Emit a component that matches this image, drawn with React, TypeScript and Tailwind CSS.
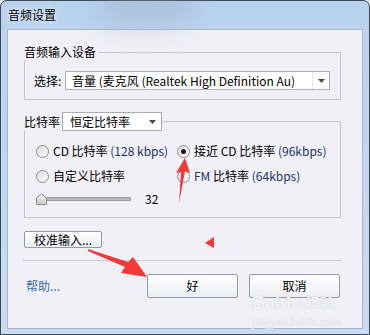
import React from 'react';

const FONT = "font-['Noto_Sans_CJK_SC','Noto_Sans',sans-serif]";

function Radio({ checked }: { checked?: boolean }) {
  return (
    <span className="flex h-[13px] w-[13px] shrink-0 items-center justify-center rounded-full border border-[#8c8c8c] bg-linear-to-br from-[#dcdcdc] to-white">
      {checked && <span className="h-[5px] w-[5px] rounded-full bg-[#1b1b1b]" />}
    </span>
  );
}

function Arrow() {
  return (
    <svg width="7" height="4" viewBox="0 0 7 4">
      <polygon points="0,0 7,0 3.5,4" fill="#4a4a4a" />
    </svg>
  );
}

function Button({ children, className }: { children: React.ReactNode; className: string }) {
  return (
    <div
      className={`flex items-center justify-center rounded-[2px] border border-[#9299aa] bg-linear-to-b from-white to-[#eceef3] text-[12px] leading-4 text-black ${className}`}
    >
      {children}
    </div>
  );
}

export default function App() {
  return (
    <div className={`relative h-[335px] w-[370px] overflow-hidden bg-[#dfe7f1] ${FONT}`}>
      <div className="flex h-full flex-col rounded-t-[7px] border border-[#3d4858] bg-linear-to-b from-[#b9d2ee] to-[#cadcf1] px-[6px] pb-[5px]">
        {/* Title bar */}
        <div className="relative flex h-[28px] items-center pl-[1px] text-[12px] leading-4 text-black [text-shadow:0_0_6px_white]">
          <div className="absolute left-[92px] top-[-4px] h-[16px] w-[95px] rounded-full bg-[#8ea1b8]/50 blur-md" />
          <div className="absolute left-[100px] top-[14px] h-[10px] w-[70px] rounded-full bg-[#a9bdd4]/60 blur-md" />
          <span className="relative">音频设置</span>
        </div>

        {/* Client area */}
        <div className="flex flex-1 flex-col border border-[#a6b6c9] bg-[#f0f0f6] pl-4 pr-[21px] pt-[14px] text-[12px] leading-4 text-black">
          {/* Group: input device */}
          <div className="flex h-4">
            <span>音频输入设备</span>
            <div className="ml-[2px] mt-2 flex-1 border-r border-t border-[#c3c8d0]" />
          </div>
          <div className="flex items-center border-b border-l border-r border-[#c3c8d0] pb-[9px] pl-[9px] pt-[11px]">
            <span className="w-[28px]">选择:</span>
            <div className="ml-[3px] flex h-[19px] w-[265px] items-center border border-[#abaeb6] bg-white pl-[6px]">
              <span className="flex-1 truncate">音量 (麦克风 (Realtek High Definition Au)</span>
              <div className="flex h-full w-[17px] items-center justify-center border-l border-[#e6e6e6]">
                <Arrow />
              </div>
            </div>
          </div>

          {/* Group: bit rate */}
          <div className="mt-3 flex h-[19px]">
            <span className="flex items-center">比特率</span>
            <div className="ml-[2px] flex h-[19px] w-[100px] items-center border border-[#abaeb6] bg-white pl-[7px]">
              <span className="flex-1">恒定比特率</span>
              <div className="flex w-[17px] items-center justify-center">
                <Arrow />
              </div>
            </div>
            <div className="mt-[9px] flex-1 border-r border-t border-[#c3c8d0]" />
          </div>
          <div className="flex flex-col gap-[9px] border-b border-l border-r border-[#c3c8d0] pb-3 pl-[11px] pt-3">
            <div className="grid grid-cols-[141px_1fr]">
              <div className="flex h-4 items-center gap-1">
                <Radio />
                <span>
                  CD 比特率 <span className="text-[#1f3470]">(128 kbps)</span>
                </span>
              </div>
              <div className="flex h-4 items-center gap-1">
                <Radio checked />
                <span>
                  接近 CD 比特率 <span className="text-[#1f3470]">(96kbps)</span>
                </span>
              </div>
            </div>
            <div className="grid grid-cols-[141px_1fr]">
              <div className="flex h-4 items-center gap-1">
                <Radio />
                <span>自定义比特率</span>
              </div>
              <div className="flex h-4 items-center gap-1">
                <Radio />
                <span>
                  <span className="text-[#1f3470]">FM</span> 比特率 <span className="text-[#1f3470]">(64kbps)</span>
                </span>
              </div>
            </div>
            <div className="flex h-3 items-center">
              <svg width="11" height="12" viewBox="0 0 11 12" className="relative z-10">
                <defs>
                  <linearGradient id="thumb" x1="0" y1="0" x2="0" y2="1">
                    <stop offset="0" stopColor="#f4f4f4" />
                    <stop offset="1" stopColor="#c9c9c9" />
                  </linearGradient>
                </defs>
                <polygon points="0.5,5 5.5,0.5 10.5,5 10.5,11.5 0.5,11.5" fill="url(#thumb)" stroke="#8a8a8a" />
              </svg>
              <div className="-ml-[2px] h-[4px] w-[86px] rounded-[1px] border border-[#9c9c9c] bg-[#b9b9b9]" />
              <span className="ml-[14px]">32</span>
            </div>
          </div>

          <Button className="mt-[13px] h-[17px] w-[78px]">校准输入...</Button>

          <div className="-mx-px mt-3 h-px bg-[#c9cbd2]" />

          <div className="mt-[13px] flex h-[24px] items-center">
            <span className="pl-[2px] text-[#3a6db5]">帮助...</span>
            <Button className="ml-auto h-[24px] w-[91px]">好</Button>
            <Button className="ml-[11px] mr-px h-[24px] w-[91px]">取消</Button>
          </div>
        </div>
      </div>

      {/* Watermark */}
      <div className="pointer-events-none absolute left-[252px] top-[296px] flex items-end text-[18px] font-bold leading-[14px] text-white/80 [text-shadow:0_0_1px_#b8bcc6]">
        <span className="font-['Liberation_Sans',sans-serif]">Baidu</span>
        <span className="ml-[3px] text-[15px] leading-[14px]">经验</span>
      </div>
      <div className="pointer-events-none absolute left-[252px] top-[314px] font-['Liberation_Serif',serif] text-[12px] leading-4 text-white/80 [text-shadow:0_0_1px_#b8bcc6]">
        jingyan.baidu.com
      </div>

      {/* Red annotation arrows */}
      <svg className="pointer-events-none absolute left-0 top-0" width="370" height="335" viewBox="0 0 370 335">
        <polygon points="88,249 128,262 133,257 147,277 121,273 125,267 88,251" fill="#f43838" />
        <polygon points="185,158 190,173 185,171 179,203 181,172 176,173" fill="#f43838" />
        <polygon points="205,243 214,237 214,248" fill="#f43838" />
      </svg>
    </div>
  );
}
